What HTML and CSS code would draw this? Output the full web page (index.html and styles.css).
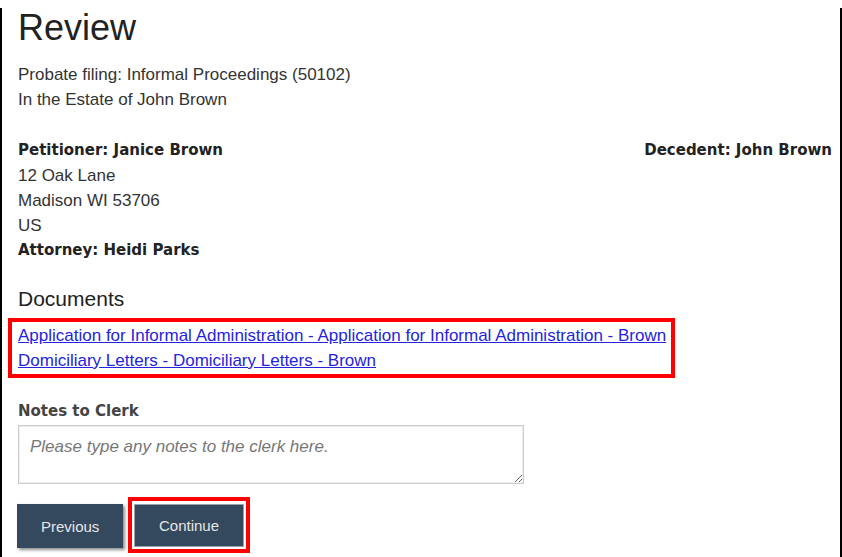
FILE: index.html
```html
<!DOCTYPE html>
<html lang="en">
<head>
  <meta charset="UTF-8">
  <meta name="viewport" content="width=device-width, initial-scale=1.0">
  <title>Review</title>
  <link rel="stylesheet" href="styles.css">
</head>
<body>
  <div class="page">
    <h1 class="title">Review</h1>
    <p class="intro">Probate filing: Informal Proceedings (50102)<br>In the Estate of John Brown</p>

    <!-- Parties -->
    <div class="parties">
      <div class="party">
        <div class="label">Petitioner: Janice Brown</div>
        <div>12 Oak Lane</div>
        <div>Madison WI 53706</div>
        <div>US</div>
        <div class="label">Attorney: Heidi Parks</div>
      </div>
      <div class="label">Decedent: John Brown</div>
    </div>

    <!-- Documents -->
    <h3 class="docs-title">Documents</h3>
    <div class="highlight docs">
      <a href="#">Application for Informal Administration - Application for Informal Administration - Brown</a><br>
      <a href="#">Domiciliary Letters - Domiciliary Letters - Brown</a>
    </div>

    <label class="notes-label" for="notes">Notes to Clerk</label>
    <textarea id="notes" class="notes" placeholder="Please type any notes to the clerk here."></textarea>

    <div class="actions">
      <button class="btn btn-prev">Previous</button>
      <div class="highlight btn-wrap">
        <button class="btn btn-continue">Continue</button>
      </div>
    </div>
  </div>
</body>
</html>
```

FILE: styles.css
```css
body {
  margin: 0;
  background-color: #fff;
  font-family: "Liberation Sans", Arial, sans-serif;
  font-size: 17px;
  color: #333;
}
.page {
  width: 842px;
  height: 553px;
  box-sizing: border-box;
  padding: 0 8px 0 16px;
  border-left: 2px solid #000;
  border-right: 2px solid #000;
  border-bottom: 2px solid #000;
  box-sizing: content-box;
  width: 814px;
}
.title {
  margin: 8px 0 0;
  font-size: 36px;
  font-weight: normal;
  line-height: 40px;
  color: #222;
}
.intro {
  margin: 14px 0 0;
  line-height: 25px;
}
.parties {
  display: flex;
  justify-content: space-between;
  align-items: flex-start;
  margin-top: 26px;
  line-height: 25px;
}
.label {
  font-family: "DejaVu Sans", Verdana, sans-serif;
  font-weight: bold;
  font-size: 15px;
  color: #222;
}
.docs-title {
  margin: 23px 0 0;
  font-size: 21px;
  font-weight: normal;
  line-height: 26px;
  color: #222;
}
.highlight {
  border: 4px solid #f00;
}
.docs {
  width: fit-content;
  margin: 6px 0 0 -10px;
  padding: 1px 5px 1px 6px;
  line-height: 25px;
}
.docs a {
  color: #2424dc;
  text-decoration: underline;
}
.notes-label {
  display: block;
  margin-top: 23px;
  font-family: "DejaVu Sans", Verdana, sans-serif;
  font-weight: bold;
  font-size: 15px;
  line-height: 20px;
  color: #444;
}
.notes {
  display: block;
  width: 506px;
  height: 59px;
  box-sizing: border-box;
  margin-top: 4px;
  padding: 8px 11px;
  border: 1px solid #ccc;
  box-shadow: inset 0 0 0 1px #eee;
  font-family: "Liberation Sans", Arial, sans-serif;
  font-size: 17px;
  line-height: 25px;
  color: #333;
}
.notes::placeholder {
  font-style: italic;
  color: #777;
}
.actions {
  display: flex;
  align-items: flex-start;
  margin-top: 13px;
}
.btn {
  height: 44px;
  padding: 0 24px;
  border: none;
  background-color: #34495e;
  color: #e6e6e6;
  font-family: "Liberation Sans", Arial, sans-serif;
  font-size: 15px;
  cursor: pointer;
}
.btn-prev {
  width: 106px;
  margin: 7px 0 0 -1px;
  box-shadow: 2px 2px 3px rgba(0, 0, 0, 0.45);
}
.btn-wrap {
  margin-left: 5px;
  padding: 3px 2px 2px;
}
.btn-continue {
  width: 110px;
  height: 43px;
  border: 1px solid #9aa3ad;
}
```
